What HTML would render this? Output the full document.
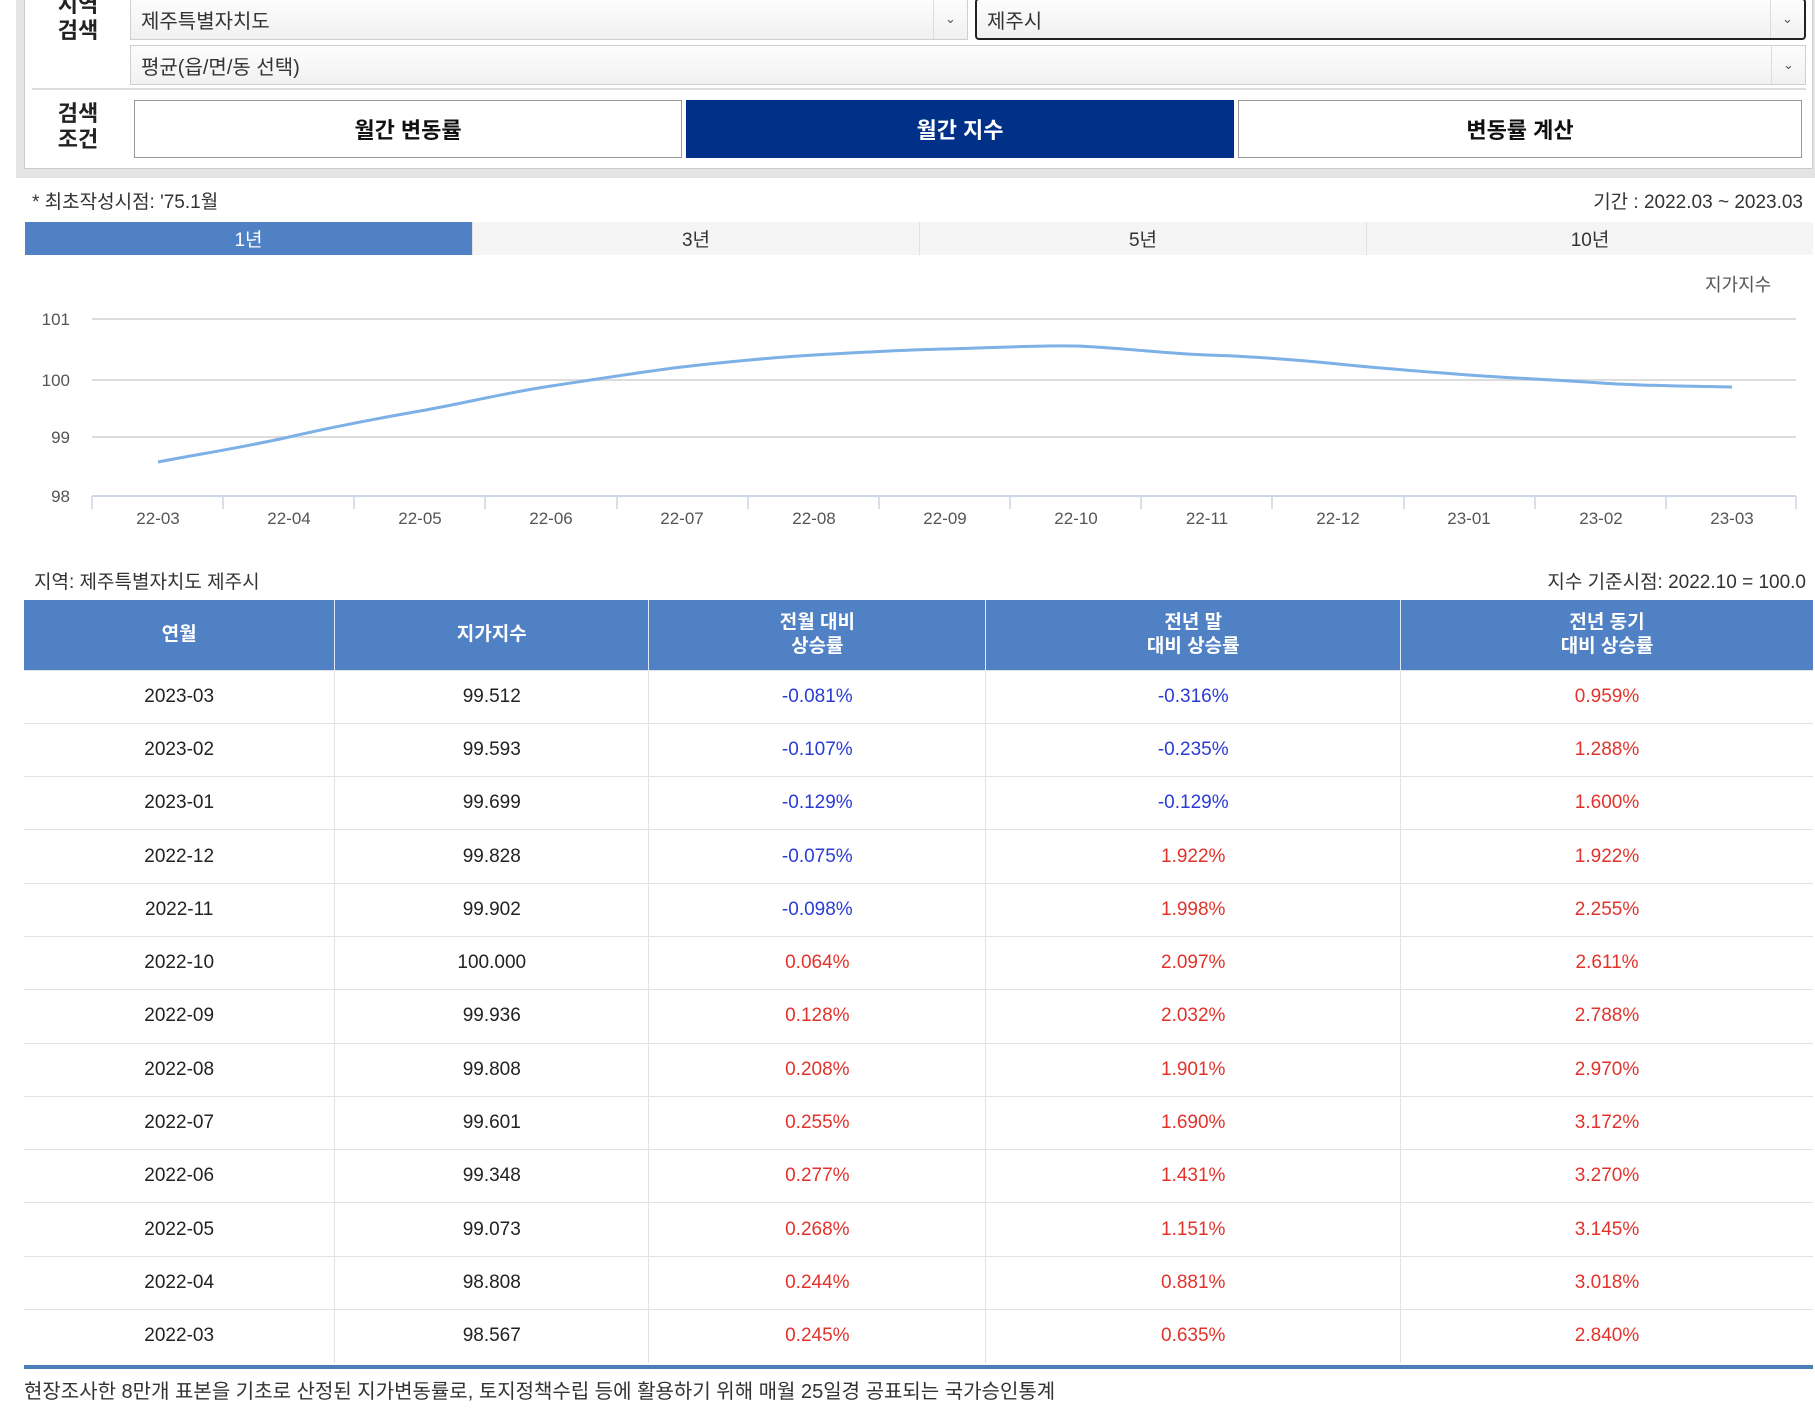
<!DOCTYPE html>
<html><head><meta charset="utf-8"><style>
*{box-sizing:border-box;margin:0;padding:0}
body{width:1815px;height:1415px;background:#fff;font-family:"Liberation Sans","Noto Sans CJK KR",sans-serif;color:#222;position:relative;overflow:hidden}
.a{position:absolute}
.sel{position:absolute;background:linear-gradient(#fdfdfd,#f1f1f1);border:1px solid #cfcfcf;font-size:20px;padding-left:10px;display:flex;align-items:center;color:#333}
.arr{position:absolute;right:0;top:0;bottom:0;width:34px;border-left:1px solid #ddd;display:flex;align-items:center;justify-content:center;font-size:13px;color:#555}
.btn{position:absolute;top:100px;height:58px;display:flex;align-items:center;justify-content:center;font-size:22px;font-weight:bold;border:1px solid #999;background:#fff;color:#111}
.lbl{position:absolute;font-size:22px;font-weight:bold;line-height:26px;text-align:center;color:#222}
.tab{position:absolute;top:222px;height:33px;width:447px;display:flex;align-items:center;justify-content:center;font-size:19px;background:#f5f5f5;border-left:1px solid #e2e2e2;color:#333}
table{position:absolute;left:24px;top:600px;width:1789px;border-collapse:collapse;font-size:19px}
th{background:#4f81c4;color:#fff;font-weight:bold;height:70px;border-left:1px solid #dfe8f4;line-height:24px}
th:first-child,td:first-child{border-left:none}
td{height:53.3px;text-align:center;border-left:1px solid #e2e2e2;border-top:1px solid #e2e2e2;color:#222}
.b{color:#2a3bd6}.r{color:#e2332b}
</style></head><body>
<div class="a" style="left:16px;top:0;width:1799px;height:178px;background:#e4e4e4"></div>
<div class="a" style="left:24px;top:0;width:1789px;height:169px;background:#fff;border:1px solid #ccc;border-top:none"></div>
<div class="lbl" style="left:52px;top:-8px;width:52px">지역<br>검색</div>
<div class="sel" style="left:130px;top:-2px;width:838px;height:42px">제주특별자치도<div class="arr">&#8964;</div></div>
<div class="sel" style="left:975px;top:-2px;width:831px;height:42px;border:2px solid #222;border-radius:4px">제주시<div class="arr">&#8964;</div></div>
<div class="sel" style="left:130px;top:45px;width:1676px;height:40px">평균(읍/면/동 선택)<div class="arr">&#8964;</div></div>
<div class="a" style="left:32px;top:88px;width:1774px;height:2px;background:#ddd"></div>
<div class="lbl" style="left:52px;top:101px;width:52px">검색<br>조건</div>
<div class="btn" style="left:134px;width:548px">월간 변동률</div>
<div class="btn" style="left:686px;width:548px;background:#003087;color:#fff;border-color:#003087">월간 지수</div>
<div class="btn" style="left:1238px;width:564px">변동률 계산</div>
<div class="a" style="left:32px;top:187px;font-size:19px;color:#333">* 최초작성시점: '75.1월</div>
<div class="a" style="right:12px;top:187px;font-size:19px;color:#333">기간 : 2022.03 ~ 2023.03</div>
<div class="tab" style="left:25px;background:#4f81c4;color:#fff;border:none">1년</div>
<div class="tab" style="left:472px">3년</div>
<div class="tab" style="left:919px">5년</div>
<div class="tab" style="left:1366px;width:447px">10년</div>
<div class="a" style="left:1705px;top:271px;font-size:18px;color:#555">지가지수</div>
<svg class="a" style="left:0;top:300px" width="1815" height="230" viewBox="0 300 1815 230">
<g stroke="#dcdcdc" stroke-width="2"><line x1="92" y1="319" x2="1796" y2="319"/><line x1="92" y1="380" x2="1796" y2="380"/><line x1="92" y1="437" x2="1796" y2="437"/></g>
<line x1="92" y1="496" x2="1796" y2="496" stroke="#cdd6e4" stroke-width="2"/>
<g stroke="#cdd6e4" stroke-width="1.5">
<line x1="92" y1="496" x2="92" y2="509"/><line x1="223" y1="496" x2="223" y2="509"/><line x1="354" y1="496" x2="354" y2="509"/><line x1="485" y1="496" x2="485" y2="509"/><line x1="617" y1="496" x2="617" y2="509"/><line x1="748" y1="496" x2="748" y2="509"/><line x1="879" y1="496" x2="879" y2="509"/><line x1="1010" y1="496" x2="1010" y2="509"/><line x1="1141" y1="496" x2="1141" y2="509"/><line x1="1272" y1="496" x2="1272" y2="509"/><line x1="1404" y1="496" x2="1404" y2="509"/><line x1="1535" y1="496" x2="1535" y2="509"/><line x1="1666" y1="496" x2="1666" y2="509"/><line x1="1796" y1="496" x2="1796" y2="509"/></g>
<g font-family="Liberation Sans,sans-serif" font-size="17" fill="#555" text-anchor="end"><text x="70" y="325">101</text><text x="70" y="386">100</text><text x="70" y="443">99</text><text x="70" y="502">98</text></g>
<g font-family="Liberation Sans,sans-serif" font-size="17" fill="#555" text-anchor="middle">
<text x="158" y="524">22-03</text><text x="289" y="524">22-04</text><text x="420" y="524">22-05</text><text x="551" y="524">22-06</text><text x="682" y="524">22-07</text><text x="814" y="524">22-08</text><text x="945" y="524">22-09</text><text x="1076" y="524">22-10</text><text x="1207" y="524">22-11</text><text x="1338" y="524">22-12</text><text x="1469" y="524">23-01</text><text x="1601" y="524">23-02</text><text x="1732" y="524">23-03</text></g>
<path d="M158 462 C200 454,250 446,289 437 S380 418,420 411 S510 392,551 386 S640 372,682 367 S780 357,814 355 S900 350,945 349 S1040 345,1076 346 S1170 354,1207 355 S1300 360,1338 364 S1430 372,1469 375 S1560 380,1601 383 S1690 386,1732 387" fill="none" stroke="#7cb0e6" stroke-width="3"/>
</svg>
<div class="a" style="left:34px;top:567px;font-size:19px;color:#333">지역: 제주특별자치도 제주시</div>
<div class="a" style="right:9px;top:567px;font-size:19px;color:#333">지수 기준시점: 2022.10 = 100.0</div>
<table>
<tr><th>연월</th><th>지가지수</th><th>전월 대비<br>상승률</th><th>전년 말<br>대비 상승률</th><th>전년 동기<br>대비 상승률</th></tr>
<tr><td>2023-03</td><td>99.512</td><td class="b">-0.081%</td><td class="b">-0.316%</td><td class="r">0.959%</td></tr>
<tr><td>2023-02</td><td>99.593</td><td class="b">-0.107%</td><td class="b">-0.235%</td><td class="r">1.288%</td></tr>
<tr><td>2023-01</td><td>99.699</td><td class="b">-0.129%</td><td class="b">-0.129%</td><td class="r">1.600%</td></tr>
<tr><td>2022-12</td><td>99.828</td><td class="b">-0.075%</td><td class="r">1.922%</td><td class="r">1.922%</td></tr>
<tr><td>2022-11</td><td>99.902</td><td class="b">-0.098%</td><td class="r">1.998%</td><td class="r">2.255%</td></tr>
<tr><td>2022-10</td><td>100.000</td><td class="r">0.064%</td><td class="r">2.097%</td><td class="r">2.611%</td></tr>
<tr><td>2022-09</td><td>99.936</td><td class="r">0.128%</td><td class="r">2.032%</td><td class="r">2.788%</td></tr>
<tr><td>2022-08</td><td>99.808</td><td class="r">0.208%</td><td class="r">1.901%</td><td class="r">2.970%</td></tr>
<tr><td>2022-07</td><td>99.601</td><td class="r">0.255%</td><td class="r">1.690%</td><td class="r">3.172%</td></tr>
<tr><td>2022-06</td><td>99.348</td><td class="r">0.277%</td><td class="r">1.431%</td><td class="r">3.270%</td></tr>
<tr><td>2022-05</td><td>99.073</td><td class="r">0.268%</td><td class="r">1.151%</td><td class="r">3.145%</td></tr>
<tr><td>2022-04</td><td>98.808</td><td class="r">0.244%</td><td class="r">0.881%</td><td class="r">3.018%</td></tr>
<tr><td>2022-03</td><td>98.567</td><td class="r">0.245%</td><td class="r">0.635%</td><td class="r">2.840%</td></tr>
</table>
<div class="a" style="left:24px;top:1365px;width:1789px;height:4px;background:#4a7fba"></div>
<div class="a" style="left:24px;top:1375px;font-size:20px;color:#333">현장조사한 8만개 표본을 기초로 산정된 지가변동률로, 토지정책수립 등에 활용하기 위해 매월 25일경 공표되는 국가승인통계</div>
</body></html>
